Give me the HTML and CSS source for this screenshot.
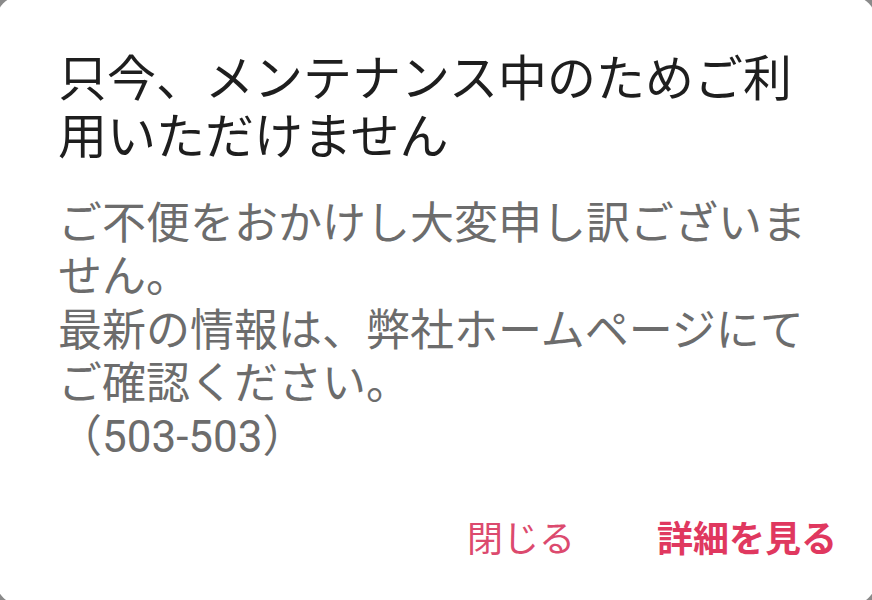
FILE: index.html
```html
<!DOCTYPE html>
<html lang="ja">
<head>
<meta charset="utf-8">
<link rel="stylesheet" href="styles.css">
</head>
<body>
<div class="dialog">
  <h1 class="title">只今、メンテナンス中のためご利用いただけません</h1>
  <p class="message">ご不便をおかけし大変申し訳ございません。<br>最新の情報は、弊社ホームページにてご確認ください。<br>（503-503）</p>
  <div class="actions">
    <button class="btn">閉じる</button>
    <button class="btn btn-primary">詳細を見る</button>
  </div>
</div>
</body>
</html>
```
FILE: styles.css
```css
html, body {
  margin: 0;
  padding: 0;
  height: 100%;
  overflow: hidden;
  background: #8a8a8a;
}
body {
  font-family: Roboto, "Noto Sans CJK JP", sans-serif;
}
.dialog {
  box-sizing: border-box;
  margin: -6px -6px 0 -6px;
  height: 613px;
  background: #ffffff;
  border-radius: 32px;
  padding: 57px 64px 0 64px;
  display: flex;
  flex-direction: column;
}
.title {
  margin: 0;
  font-size: 49px;
  line-height: 57.6px;
  font-weight: 400;
  color: #1e1e1e;
}
.message {
  margin: 32px 0 0 0;
  font-size: 44px;
  line-height: 53.3px;
  color: #6c6c6c;
}
.actions {
  margin-top: auto;
  display: flex;
  justify-content: flex-end;
  gap: 82px;
  padding: 0 41px 46px 0;
  margin-right: -64px;
}
.btn {
  border: 0;
  background: none;
  padding: 0;
  font-family: Roboto, "Noto Sans CJK JP", sans-serif;
  font-size: 36px;
  line-height: 42px;
  color: #dc4a6e;
  font-weight: 400;
}
.btn-primary {
  font-weight: 700;
  color: #e0385f;
}
```
